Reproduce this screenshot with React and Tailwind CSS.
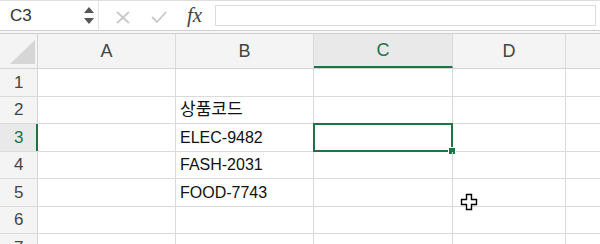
import React from 'react';

const cols = [
  { key: 'A', w: 'w-[138px]' },
  { key: 'B', w: 'w-[138px]' },
  { key: 'C', w: 'w-[139px]' },
  { key: 'D', w: 'w-[113px]' },
];

const rows = [
  { n: 1, h: 'h-[28px]', b: '' },
  { n: 2, h: 'h-[27px]', b: '상품코드', ko: true },
  { n: 3, h: 'h-[28px]', b: 'ELEC-9482' },
  { n: 4, h: 'h-[27px]', b: 'FASH-2031' },
  { n: 5, h: 'h-[28px]', b: 'FOOD-7743' },
  { n: 6, h: 'h-[27px]', b: '' },
  { n: 7, h: 'h-[28px]', b: '' },
];

const App = () => {
  return (
    <div className="relative w-[600px] h-[244px] overflow-hidden bg-white font-['Liberation_Sans','Noto_Sans_CJK_KR',sans-serif] text-[#222]">
      {/* formula bar */}
      <div className="flex h-[31px] border-t border-[#dedede] border-b border-b-[#cfcfcf] bg-white">
        <div className="flex items-center justify-between w-[99px] pl-[10px] pr-[4px] border-r border-[#e3e3e3]">
          <span className="text-[17px] text-[#333]">C3</span>
          <div className="flex flex-col gap-[5px]">
            <div className="w-0 h-0 border-l-[5px] border-r-[5px] border-b-[6px] border-l-transparent border-r-transparent border-b-[#555]" />
            <div className="w-0 h-0 border-l-[5px] border-r-[5px] border-t-[6px] border-l-transparent border-r-transparent border-t-[#555]" />
          </div>
        </div>
        <div className="flex items-center w-[116px] pl-[17px]">
          <svg width="14" height="13" viewBox="0 0 14 13" className="mt-[3px]">
            <path d="M1 1 L13 12 M13 1 L1 12" stroke="#c9c9c9" strokeWidth="1.8" fill="none" />
          </svg>
          <svg width="16" height="12" viewBox="0 0 16 12" className="ml-[21px] mt-[3px]">
            <path d="M1 6 L6 11 L15 1" stroke="#c9c9c9" strokeWidth="1.8" fill="none" />
          </svg>
          <span className="ml-[20px] text-[21px] italic font-['Liberation_Serif',serif] text-[#444] leading-none">fx</span>
        </div>
        <div className="flex-1 my-[4px] mr-[4px] border border-[#dcdcdc] bg-white" />
      </div>
      <div className="h-[3px] bg-[#f7f7f7] border-b border-[#cfcfcf]" />

      {/* column headers */}
      <div className="flex h-[35px] bg-[#f4f4f4] border-b border-[#d4d4d4]">
        <div className="relative w-[38px] border-r border-[#d4d4d4]">
          <svg width="26" height="24" viewBox="0 0 26 24" className="absolute left-[10px] top-[6px]">
            <path d="M25 0 L25 24 L0 24 Z" fill="#d6d6d6" />
          </svg>
        </div>
        {cols.map((c) => (
          <div
            key={c.key}
            className={`${c.w} flex items-center justify-center border-r border-[#dadada] text-[18px] ${
              c.key === 'C' ? 'bg-[#e9e9e9] text-[#217346] border-b-2 border-b-[#217346]' : 'text-[#444]'
            }`}
          >
            {c.key}
          </div>
        ))}
        <div className="flex-1" />
      </div>

      {/* rows */}
      {rows.map((r) => (
        <div key={r.n} className={`flex ${r.h} border-b border-[#dadada]`}>
          <div
            className={`w-[38px] flex items-center pl-[14px] text-[17px] border-r ${
              r.n === 3 ? 'bg-[#e9e9e9] text-[#217346] border-r-2 border-[#217346]' : 'bg-[#f4f4f4] text-[#444] border-[#d4d4d4]'
            }`}
          >
            {r.n}
          </div>
          <div className="w-[138px] border-r border-[#dadada]" />
          <div
            className={`w-[138px] flex items-center pl-[4px] text-[#111] border-r border-[#dadada] ${
              r.ko ? 'text-[17px]' : 'text-[16px]'
            }`}
          >
            {r.b}
          </div>
          <div className="relative w-[139px] border-r border-[#dadada]">
            {r.n === 3 && (
              <div className="absolute -left-[1px] -top-[1px] -right-[1px] -bottom-[1px] border-2 border-[#217346]">
                <div className="absolute -right-[5px] -bottom-[5px] w-[8px] h-[8px] bg-[#217346] border border-white" />
              </div>
            )}
          </div>
          <div className="w-[113px] border-r border-[#dadada]" />
          <div className="flex-1" />
        </div>
      ))}

      {/* mouse cursor */}
      <svg width="18" height="18" viewBox="0 0 18 18" className="absolute left-[460px] top-[193px]">
        <path
          d="M6.5 1.5 H11.5 V6.5 H16.5 V11.5 H11.5 V16.5 H6.5 V11.5 H1.5 V6.5 H6.5 Z"
          fill="white"
          stroke="black"
          strokeWidth="1.4"
        />
      </svg>
    </div>
  );
};

export default App;
